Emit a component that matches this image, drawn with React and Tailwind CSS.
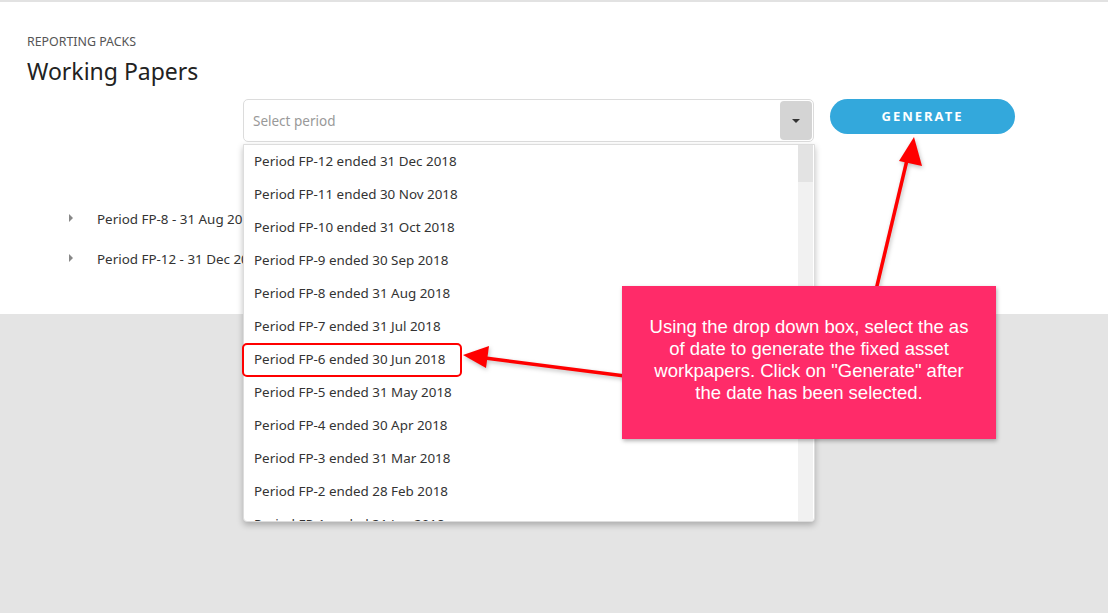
import { useState } from "react";

const periods = [
  "Period FP-12 ended 31 Dec 2018",
  "Period FP-11 ended 30 Nov 2018",
  "Period FP-10 ended 31 Oct 2018",
  "Period FP-9 ended 30 Sep 2018",
  "Period FP-8 ended 31 Aug 2018",
  "Period FP-7 ended 31 Jul 2018",
  "Period FP-6 ended 30 Jun 2018",
  "Period FP-5 ended 31 May 2018",
  "Period FP-4 ended 30 Apr 2018",
  "Period FP-3 ended 31 Mar 2018",
  "Period FP-2 ended 28 Feb 2018",
  "Period FP-1 ended 31 Jan 2018",
];

const packs = ["Period FP-8 - 31 Aug 2018", "Period FP-12 - 31 Dec 2018"];

export default function App() {
  const [selected, setSelected] = useState("");

  return (
    <div
      className="relative flex h-[613px] w-[1108px] flex-col overflow-hidden bg-[#e4e4e4]"
      style={{ fontFamily: "'Noto Sans', 'Open Sans', sans-serif" }}
    >
      {/* page body */}
      <div className="h-[314px] border-t-2 border-[#e2e2e2] bg-white pl-[27px] pt-[31px]">
        <p className="text-[12.4px] leading-[18px] text-[#555]">REPORTING PACKS</p>
        <h1 className="mt-[4px] text-[23px] leading-[32px] text-[#222]">Working Papers</h1>

        <div className="mt-[12px] flex items-start pl-[216px]">
          <div className="relative h-[43px] w-[571px] rounded-[5px] border border-[#dcdcdc] bg-white">
            <div className="flex h-full items-center pl-[9px] pt-[1px] text-[13.5px] text-[#999]">
              {selected || "Select period"}
            </div>
            <div className="absolute right-[1px] top-[1px] flex h-[39px] w-[32px] items-center justify-center rounded-[4px] bg-[#d4d4d4]">
              <div className="h-0 w-0 border-l-[4px] border-r-[4px] border-t-[4px] border-l-transparent border-r-transparent border-t-[#333]" />
            </div>

            {/* open dropdown */}
            <div className="absolute left-[-1px] top-[44px] z-10 flex h-[378px] w-[572px] overflow-hidden rounded-b-[4px] border border-[#ddd] bg-white shadow-[0_3px_6px_rgba(0,0,0,0.25)]">
              <ul className="flex-1">
                {periods.map((p) => (
                  <li
                    key={p}
                    onClick={() => setSelected(p)}
                    className="flex h-[33px] shrink-0 cursor-pointer items-center pl-[10px] text-[13.4px] text-[#333]"
                  >
                    {p}
                  </li>
                ))}
              </ul>
              <div className="mr-[1px] w-[15px] bg-[#f1f1f1]">
                <div className="h-[37px] bg-[#e3e3e3]" />
              </div>
            </div>
          </div>
          <button className="ml-[16px] h-[35px] w-[185px] rounded-full bg-[#33a8dc] text-[13px] font-bold tracking-[2px] text-white">
            GENERATE
          </button>
        </div>

        <ul className="mt-[67px] pl-[42px]">
          {packs.map((p) => (
            <li key={p} className="flex h-[40px] items-start text-[13.4px] text-[#333]">
              <span className="mt-[5px] h-0 w-0 border-b-[4px] border-l-[4px] border-t-[4px] border-b-transparent border-l-[#888] border-t-transparent" />
              <span className="ml-[24px]">{p}</span>
            </li>
          ))}
        </ul>
      </div>
      <div className="flex-1" />

      {/* annotation: highlight around FP-6 */}
      <div className="absolute left-[242px] top-[343px] z-20 h-[34px] w-[220px] rounded-[5px] border-2 border-[#f00]" />

      {/* annotation arrows */}
      <svg
        className="absolute left-0 top-0 z-20"
        width="1108"
        height="613"
        style={{ filter: "drop-shadow(1px 2px 2px rgba(0,0,0,0.25))" }}
      >
        <line x1="625" y1="376" x2="485" y2="358" stroke="#f00" strokeWidth="3.5" />
        <polygon points="463,355 489,346 486,368" fill="#f00" />
        <line x1="876" y1="290" x2="907" y2="160" stroke="#f00" strokeWidth="3.5" />
        <polygon points="914,137 922,166 899,161" fill="#f00" />
      </svg>

      {/* annotation callout */}
      <div
        className="absolute left-[622px] top-[286px] z-30 flex h-[153px] w-[374px] items-start justify-center bg-[#ff2b69] px-[20px] pt-[30px] text-center text-[18.5px] leading-[22px] text-white shadow-[1px_2px_4px_rgba(0,0,0,0.3)]"
        style={{ fontFamily: "'Liberation Sans', Arial, sans-serif" }}
      >
        Using the drop down box, select the as of date to generate the fixed asset workpapers. Click on "Generate" after the date has been selected.
      </div>
    </div>
  );
}
